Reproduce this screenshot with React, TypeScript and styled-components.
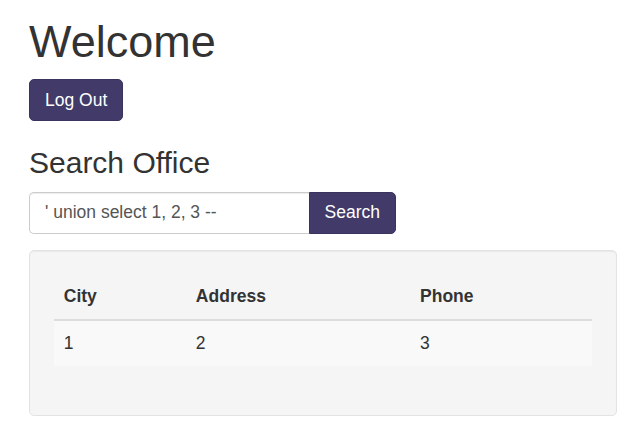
import styled, { createGlobalStyle } from 'styled-components'

const GlobalStyle = createGlobalStyle`
  html, body {
    margin: 0;
    padding: 0;
    background: #fff;
  }
  body {
    font-family: "Liberation Sans", Arial, Helvetica, sans-serif;
    font-size: 17.5px;
    line-height: 1.42857;
    color: #333;
  }
  * {
    box-sizing: border-box;
  }
`

const Page = styled.div`
  padding: 17px 10px 0 29px;
`

const Title = styled.h1`
  margin: 0 0 12.5px;
  font-size: 45px;
  font-weight: 500;
  line-height: 1.1;
`

const SubTitle = styled.h3`
  margin: 25px 0 12.5px;
  font-size: 30px;
  font-weight: 500;
  line-height: 1.1;
`

const Button = styled.button<{ $attached?: boolean }>`
  display: inline-block;
  height: 42px;
  padding: 7.5px 15px;
  font-family: inherit;
  font-size: 17.5px;
  line-height: 25px;
  color: #fff;
  background-color: #423b69;
  border: 1.25px solid #3a335e;
  border-radius: ${p => (p.$attached ? '0 5px 5px 0' : '5px')};
  cursor: pointer;
`

const SearchForm = styled.form`
  display: flex;
  width: 367px;
  margin-bottom: 16px;
`

const SearchInput = styled.input`
  flex: 1;
  min-width: 0;
  height: 42px;
  padding: 7.5px 15px;
  font-family: inherit;
  font-size: 17.5px;
  line-height: 25px;
  color: #555;
  background: #fff;
  border: 1.25px solid #ccc;
  border-right: none;
  border-radius: 5px 0 0 5px;
  box-shadow: inset 0 1px 1px rgba(0, 0, 0, 0.075);
  outline: none;
`

const Well = styled.div`
  min-height: 25px;
  padding: 23.75px;
  background-color: #f5f5f5;
  border: 1.25px solid #e3e3e3;
  border-radius: 5px;
  box-shadow: inset 0 1px 1px rgba(0, 0, 0, 0.05);
`

const Table = styled.table`
  width: 100%;
  margin-bottom: 25px;
  border-collapse: collapse;
  border-spacing: 0;
`

const HeadCell = styled.th<{ $w: number }>`
  width: ${p => p.$w}px;
  padding: 10px;
  text-align: left;
  font-weight: 700;
  line-height: 25px;
  vertical-align: bottom;
  border-bottom: 2.5px solid #ddd;
`

const Row = styled.tr<{ $striped?: boolean }>`
  background-color: ${p => (p.$striped ? '#f9f9f9' : 'transparent')};
`

const Cell = styled.td`
  padding: 10px;
  line-height: 25px;
  vertical-align: top;
`

const columns = [
  { label: 'City', width: 132 },
  { label: 'Address', width: 224 },
  { label: 'Phone', width: 182 },
]

const rows = [['1', '2', '3']]

export default function App() {
  return (
    <>
      <GlobalStyle />
      <Page>
        <Title>Welcome</Title>
        <Button type="button">Log Out</Button>
        <SubTitle>Search Office</SubTitle>
        <SearchForm onSubmit={e => e.preventDefault()}>
          <SearchInput type="text" defaultValue="' union select 1, 2, 3 --" />
          <Button type="submit" $attached>Search</Button>
        </SearchForm>
        <Well>
          <Table>
            <thead>
              <tr>
                {columns.map(c => (
                  <HeadCell key={c.label} $w={c.width}>{c.label}</HeadCell>
                ))}
              </tr>
            </thead>
            <tbody>
              {rows.map((r, i) => (
                <Row key={i} $striped={i % 2 === 0}>
                  {r.map((v, j) => (
                    <Cell key={j}>{v}</Cell>
                  ))}
                </Row>
              ))}
            </tbody>
          </Table>
        </Well>
      </Page>
    </>
  )
}
